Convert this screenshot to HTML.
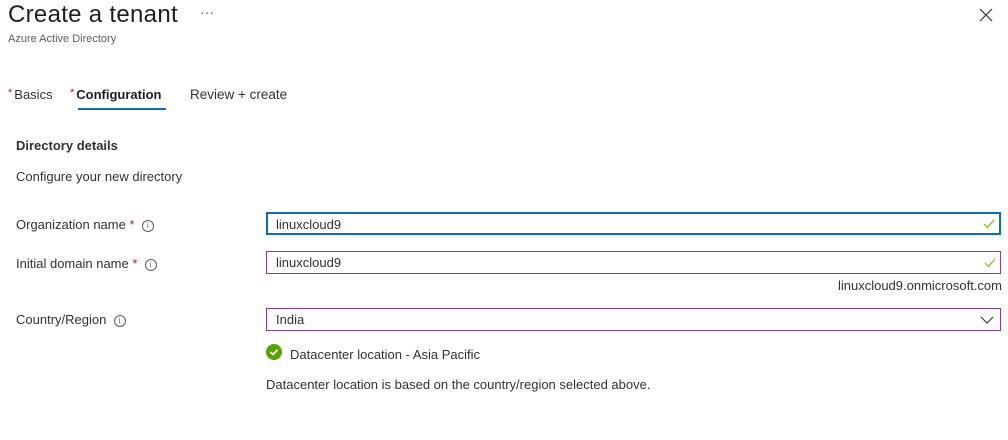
<!DOCTYPE html>
<html><head><style>
body{margin:0;width:1008px;height:440px;background:#fff;font-family:"Liberation Sans",sans-serif;color:#323130;position:relative;overflow:hidden}
.a{position:absolute;white-space:nowrap}
.s{font-size:13px}
.box{position:absolute;left:266px;width:735px;height:21px;border:1px solid #8a3e9f;box-sizing:border-box}
.box span{position:absolute;left:9px;top:3px;font-size:13px}
.req{color:#a4262c}
.ast{color:#a4262c;font-size:11px;vertical-align:3px;margin-right:2px}
.info{display:inline-block;width:10px;height:10px;border:1px solid #605e5c;border-radius:50%;font-size:8px;line-height:10px;text-align:center;color:#605e5c;vertical-align:1px}
</style></head><body>
<div class="a" style="left:8px;top:1px;font-size:24px;color:#201f1e;letter-spacing:0.3px">Create a tenant</div>
<div class="a" style="left:200px;top:4px;font-size:14px;color:#605e5c">···</div>
<div class="a" style="left:8px;top:33px;font-size:11px;color:#605e5c">Azure Active Directory</div>
<svg class="a" style="left:979px;top:8px" width="14" height="14"><path d="M1 1L13 13M13 1L1 13" stroke="#323130" stroke-width="1.2"/></svg>
<div class="a s" style="left:8px;top:87px"><span class="ast">*</span>Basics</div>
<div class="a s" style="left:70px;top:87px"><span class="ast">*</span><span style="font-weight:bold;color:#201f1e">Configuration</span></div>
<div class="a" style="left:78px;top:108px;width:88px;height:2px;background:#0f6cbd"></div>
<div class="a" style="left:190px;top:87px;font-size:13.5px">Review + create</div>
<div class="a" style="left:16px;top:138px;font-size:13px;font-weight:bold">Directory details</div>
<div class="a s" style="left:16px;top:169px">Configure your new directory</div>
<div class="a s" style="left:16px;top:217px">Organization name <span class="req">*</span> &nbsp;<span class="info">i</span></div>
<div class="a s" style="left:16px;top:256px">Initial domain name <span class="req">*</span> &nbsp;<span class="info">i</span></div>
<div class="a s" style="left:16px;top:312px">Country/Region &nbsp;<span class="info">i</span></div>
<div class="box" style="top:212px;height:23px;border:2px solid #0f6cbd"><span style="left:8px;top:3px">linuxcloud9</span>
<svg style="position:absolute;right:4px;top:5px" width="12" height="10"><path d="M1 5L4.5 8.5L11 1" fill="none" stroke="#6bb700" stroke-width="1"/></svg></div>
<div class="box" style="top:251px;height:23px"><span>linuxcloud9</span>
<svg style="position:absolute;right:4px;top:6px" width="12" height="10"><path d="M1 5L4.5 8.5L11 1" fill="none" stroke="#6bb700" stroke-width="1"/></svg></div>
<div class="a s" style="right:6px;top:278px">linuxcloud9.onmicrosoft.com</div>
<div class="box" style="top:308px;height:23px"><span>India</span>
<svg style="position:absolute;right:6px;top:7px" width="14" height="8"><path d="M1 1L7 7L13 1" fill="none" stroke="#323130" stroke-width="1.1"/></svg></div>
<svg class="a" style="left:266px;top:344px" width="16" height="16"><circle cx="8" cy="8" r="8" fill="#57a300"/><path d="M4.5 8.2L7 10.5L11.5 5.8" fill="none" stroke="#fff" stroke-width="1.8"/></svg>
<div class="a s" style="left:290px;top:347px">Datacenter location - Asia Pacific</div>
<div class="a s" style="left:266px;top:377px">Datacenter location is based on the country/region selected above.</div>
</body></html>
